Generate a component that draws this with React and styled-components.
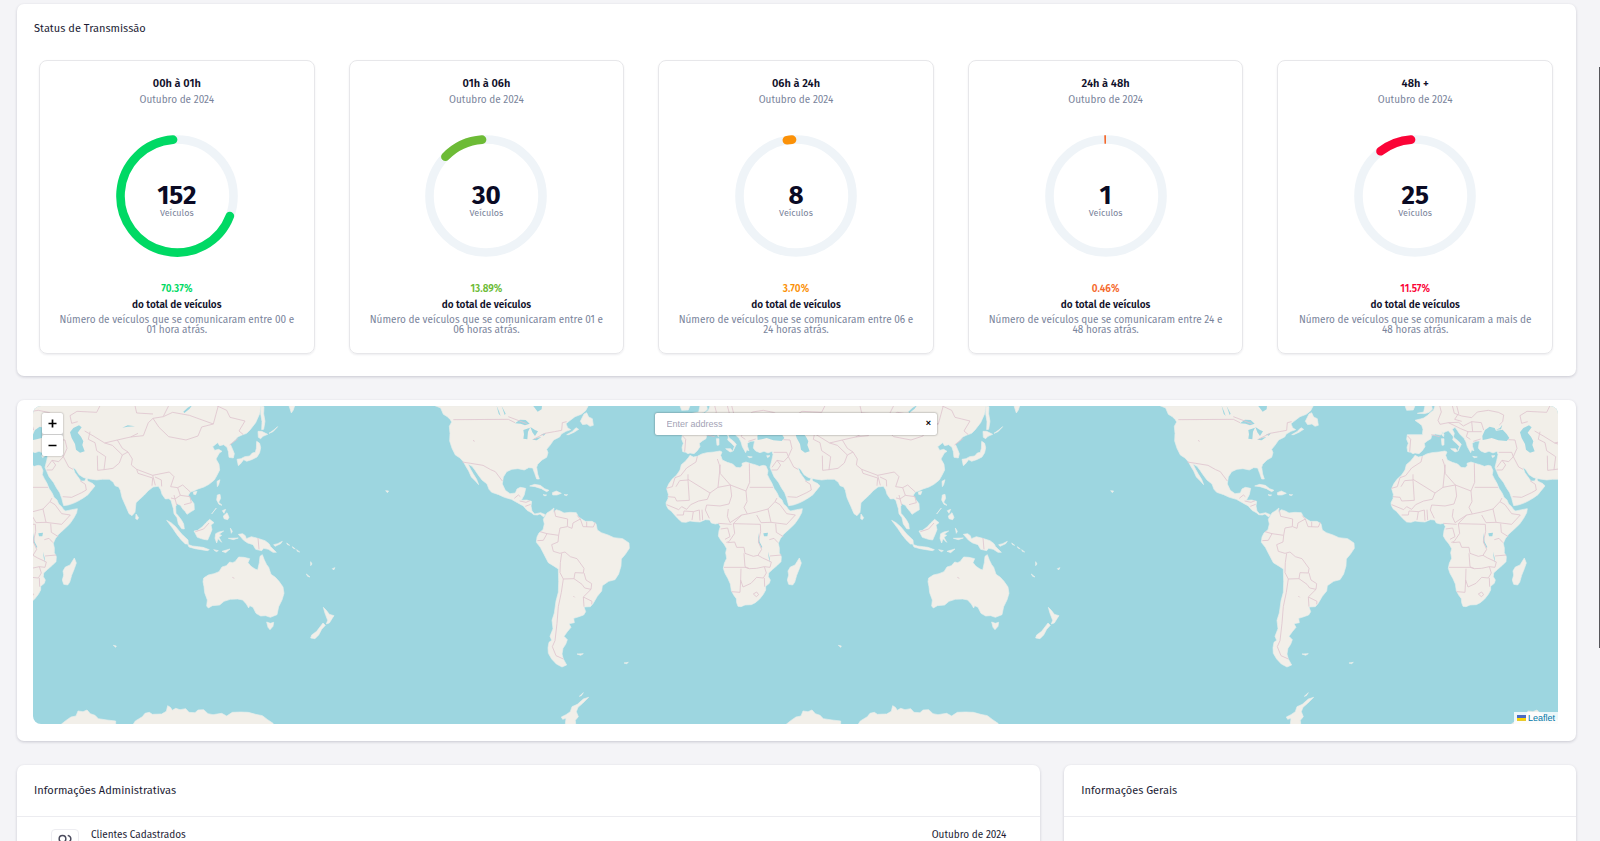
import React from "react";
import styled, { createGlobalStyle } from "styled-components";
import { Users } from "lucide-react";

const GlobalStyle = createGlobalStyle`
  * { box-sizing: border-box; }
  body {
    margin: 0;
    background: #f4f4f7;
    color: #1b1b33;
    font-family: "Fira Sans", Roboto, "Noto Sans", sans-serif;
  }
  h2, h3, p { margin: 0; }
`;

const Page = styled.main`
  display: flex;
  flex-direction: column;
  gap: 24px;
  height: 100vh;
  overflow: hidden;
  padding: 4px 24px 0 17px;
`;

const Panel = styled.section`
  flex: none;
  background: #fff;
  border-radius: 7px;
  box-shadow: 0 1px 3px rgba(30, 30, 60, 0.2);
`;

const PanelTitle = styled.h2`
  padding: ${(p) => (p.$ruled ? "17px 17px 16px" : "16px 17px")};
  font-size: 11px;
  font-weight: 400;
  line-height: 18px;
  border-bottom: 1px solid ${(p) => (p.$ruled ? "#ececf0" : "transparent")};
`;

const StatGrid = styled.div`
  display: grid;
  grid-template-columns: repeat(5, 1fr);
  gap: 34px;
  padding: 5px 23px 22px 22px;
`;

const StatCard = styled.article`
  display: flex;
  flex-direction: column;
  align-items: center;
  padding: 15px 16px 18px;
  border: 1px solid #e7e7ea;
  border-radius: 8px;
  box-shadow: 0 1px 2px rgba(30, 30, 60, 0.08);
  text-align: center;
`;

const StatTitle = styled.h3`
  font-size: 11px;
  font-weight: 600;
  line-height: 16px;
  color: #10102a;
`;

const StatMonth = styled.p`
  font-size: 10px;
  line-height: 16px;
  color: #7a849b;
`;

const RingBox = styled.div`
  display: grid;
  place-items: center;
  margin: 27px 0 24px;
  > * { grid-area: 1 / 1; }
`;

const RingSvg = styled.svg`
  display: block;
  width: 122px;
  height: 122px;
`;

const RingLabel = styled.div`
  padding-top: 10px;
`;

const RingNumber = styled.p`
  font-size: 26px;
  font-weight: 700;
  line-height: 24px;
  color: #0a0a24;
`;

const RingUnit = styled.p`
  font-size: 9px;
  line-height: 10px;
  color: #7a849b;
`;

const Percent = styled.p`
  font-size: 10px;
  font-weight: 600;
  line-height: 16px;
  color: ${(p) => p.$color};
`;

const Total = styled.p`
  font-size: 10px;
  font-weight: 600;
  line-height: 16px;
  color: #10102a;
`;

const Description = styled.p`
  padding-top: 2px;
  font-size: 10px;
  line-height: 10px;
  color: #7a849b;
`;

const MapPanel = styled(Panel)`
  padding: 6px 18px 17px 16px;
`;

const MapFrame = styled.div`
  position: relative;
  height: 318px;
  border-radius: 8px 8px 0 8px;
  overflow: hidden;
  background: #9dd6e0;
`;

const MapSvg = styled.svg`
  display: block;
  width: 100%;
  height: 100%;
`;

const ZoomControls = styled.div`
  position: absolute;
  top: 7px;
  left: 9px;
  display: flex;
  flex-direction: column;
  gap: 1px;
  background: #ccc;
  border-radius: 2px;
  box-shadow: 0 0 2px rgba(0, 0, 0, 0.4);
`;

const ZoomButton = styled.button`
  display: grid;
  place-items: center;
  width: 21px;
  height: 21px;
  padding: 0;
  border: 0;
  border-radius: 2px;
  background: #fff;
  color: #000;
`;

const SearchBox = styled.form`
  position: absolute;
  top: 7px;
  left: 50%;
  transform: translateX(-50%);
  display: flex;
  width: 282px;
  height: 22px;
  background: #fff;
  border-radius: 2px;
  box-shadow: 0 0 2px rgba(0, 0, 0, 0.5);
`;

const SearchInput = styled.input`
  flex: 1;
  min-width: 0;
  padding: 0 12px;
  border: 0;
  outline: 0;
  background: transparent;
  font: 9px "Liberation Sans", Arial, sans-serif;
  &::placeholder { color: #a3a3b5; opacity: 1; }
`;

const ClearButton = styled.button`
  width: 16px;
  height: 20px;
  padding: 0;
  border: 0;
  background: transparent;
  color: #000;
  font: bold 9px/20px "Liberation Sans", Arial, sans-serif;
`;

const Attribution = styled.a`
  position: absolute;
  right: 0;
  bottom: 0;
  display: flex;
  align-items: center;
  gap: 2px;
  padding: 0 3px;
  background: rgba(255, 255, 255, 0.8);
  color: #0078a8;
  font: 9px/12px "Liberation Sans", Arial, sans-serif;
  text-decoration: none;
`;

const InfoGrid = styled.div`
  display: grid;
  grid-template-columns: 2fr 1fr;
  gap: 24px;
`;

const InfoRow = styled.div`
  display: flex;
  align-items: flex-start;
  gap: 12px;
  padding: 12px 34px;
  font-size: 10px;
  line-height: 12px;
`;

const IconTile = styled.span`
  display: grid;
  place-items: center;
  width: 28px;
  height: 28px;
  border: 1px solid #ededf1;
  border-radius: 4px;
  color: #4a4a5c;
`;

const RowDate = styled.span`
  margin-left: auto;
`;

const ScrollThumb = styled.div`
  position: fixed;
  top: 8%;
  right: 0;
  width: 1px;
  height: 69%;
  background: #55555a;
`;

const STATS = [
  { title: "00h à 01h", count: 152, percent: "70.37", color: "#00d964", text: "Número de veículos que se comunicaram entre 00 e 01 hora atrás." },
  { title: "01h à 06h", count: 30, percent: "13.89", color: "#6dbb36", text: "Número de veículos que se comunicaram entre 01 e 06 horas atrás." },
  { title: "06h à 24h", count: 8, percent: "3.70", color: "#fb9108", text: "Número de veículos que se comunicaram entre 06 e 24 horas atrás." },
  { title: "24h à 48h", count: 1, percent: "0.46", color: "#f5692c", text: "Número de veículos que se comunicaram entre 24 e 48 horas atrás." },
  { title: "48h +", count: 25, percent: "11.57", color: "#fb0437", text: "Número de veículos que se comunicaram a mais de 48 horas atrás." },
];

const R = 56.5;
const CAP = 4;

function point(deg) {
  const a = (deg * Math.PI) / 180;
  return `${61 - R * Math.sin(a)} ${61 - R * Math.cos(a)}`;
}

/* Arc that runs counter-clockwise from the top; round caps stay inside its sweep. */
function Ring({ percent, color }) {
  const sweep = Number(percent) * 3.6;
  const tiny = sweep < 2 * CAP;
  const from = tiny ? 0 : CAP;
  const to = tiny ? sweep : sweep - CAP;
  return (
    <RingSvg viewBox="0 0 122 122" aria-hidden="true">
      <circle cx="61" cy="61" r={R} fill="none" stroke="#eff4f8" strokeWidth="8.6" />
      <path
        d={`M${point(from)} A${R} ${R} 0 ${to - from > 180 ? 1 : 0} 0 ${point(to)}`}
        fill="none"
        stroke={color}
        strokeWidth="8.6"
        strokeLinecap={tiny ? "butt" : "round"}
      />
    </RingSvg>
  );
}

const OLD_WORLD = [
  "M150 226 160 231 172 229 185 222 200 218 222 216 240 213 246 216 242 226 247 240 262 247 278 252 288 262 300 263 307 258 306 250 318 246 330 250 345 254 358 259 370 256 378 258 384 272 382 284 388 296 396 310 402 325 412 340 417 352 426 360 431 372 440 380 446 389 452 393 470 389 487 386 485 398 476 415 464 432 446 449 431 463 421 476 415 490 418 504 418 518 424 530 423 545 412 556 398 568 386 579 385 590 391 600 388 610 377 619 377 630 370 643 359 657 346 668 334 674 315 675 303 680 294 679 290 668 289 656 281 645 274 632 271 612 264 596 255 580 250 565 253 550 260 535 257 518 260 506 252 492 242 480 235 468 237 452 241 440 236 430 226 432 214 429 209 420 196 419 180 426 165 425 150 423 138 427 125 426 114 416 103 404 94 394 84 386 79 376 78 368 84 356 85 343 80 326 86 312 96 298 110 285 120 270 124 254 136 244 145 233Z",
  "M210 77 206 90 195 99 188 106 176 114 166 117 150 121 160 128 170 136 174 148 172 164 150 164 127 164 125 178 130 190 126 202 128 215 137 217 144 221 150 219 162 221 172 212 180 200 178 190 188 182 198 176 200 166 212 162 226 165 240 156 250 152 258 161 268 174 280 183 289 193 284 203 279 213 283 199 274 190 263 180 268 160 262 148 270 142 276 150 284 162 297 175 303 186 307 200 317 218 320 210 327 212 323 200 322 190 332 184 344 183 342 191 340 204 347 213 360 218 372 214 384 219 396 214 399 224 395 242 390 262 395 274 402 290 416 308 424 323 434 338 440 355 446 377 460 375 475 370 488 364 505 354 519 344 526 335 540 318 534 311 518 303 515 291 509 303 498 303 493 296 487 288 480 278 474 263 481 267 492 284 506 293 524 297 545 300 562 298 583 298 595 307 600 317 611 321 616 331 621 353 633 380 642 401 651 407 660 397 663 368 674 358 688 345 700 332 714 321 730 319 737 329 741 343 751 357 762 356 768 362 775 386 777 401 786 413 790 432 800 446 808 447 806 432 800 421 791 409 783 400 782 380 786 371 796 376 804 388 811 395 816 403 830 394 838 389 837 371 827 358 820 346 826 336 836 333 849 327 867 321 882 313 898 300 906 286 914 270 912 253 903 237 913 219 921 214 911 208 899 211 893 200 908 188 914 197 926 194 936 202 940 215 942 232 955 234 958 221 952 206 946 193 959 181 968 171 981 165 995 160 1005 150 1022 128 1034 101 1038 77Z",
  "M120 77 150 77 145 90 125 91ZM157 100 176 96 180 77 200 77 202 88 193 97 178 101Z",
  "M478 534 484 549 478 566 470 586 464 607 458 615 446 613 442 600 446 585 444 573 451 561 465 555Z",
  "M663 402 671 413 667 419 662 416Z",
  "M755 421 768 428 782 440 800 462 819 480 820 492 811 492 798 479 786 464 773 445Z",
  "M818 493 832 498 850 500 864 502 883 509 877 512 858 509 840 506 822 501ZM896 509 910 512 904 515ZM921 514 945 507 932 518Z",
  "M837 453 848 451 862 440 873 428 884 418 897 428 888 435 891 449 885 464 878 480 865 478 847 472Z",
  "M902 461 912 456 926 453 912 463 920 466 912 472 920 487 909 476 905 489 900 475Z",
  "M907 345 915 343 917 355 911 367 921 376 912 373 905 360ZM922 392 932 388 927 400ZM925 408 936 398 942 412 938 419 927 416ZM890 402 904 384 893 398Z",
  "M970 463 983 461 991 467 994 476 1009 470 1028 475 1050 482 1062 491 1067 500 1084 517 1074 517 1060 508 1046 505 1040 512 1022 508 1014 494 998 489 986 481 978 472ZM1076 494 1088 491 1102 484 1097 491 1080 499ZM946 444 952 454 949 460ZM940 475 970 474 955 479Z",
  "M1115 489 1124 496 1118 494ZM1132 500 1141 507 1134 504ZM1145 509 1154 516 1147 514ZM1174 582 1185 591 1178 589ZM1252 566 1260 563 1256 570ZM1187 545 1191 552 1187 557Z",
  "M866 594 880 585 897 581 912 575 921 561 934 557 944 546 952 548 960 545 971 531 987 532 1004 536 999 548 1008 559 1020 567 1028 570 1033 548 1035 529 1042 524 1048 540 1055 554 1061 562 1068 583 1081 592 1092 604 1104 621 1107 640 1101 660 1091 680 1086 704 1066 712 1052 707 1037 708 1023 700 1014 682 1004 677 1001 684 994 672 983 660 968 657 946 658 927 664 914 675 892 677 880 684 875 678 877 660 869 638 867 620 864 605Z",
  "M1055 726 1066 730 1076 727 1074 739 1065 749 1059 742Z",
  "M1225 682 1234 691 1243 703 1257 707 1251 716 1243 729 1234 732 1238 721 1230 700ZM1224 729 1231 736 1220 748 1211 765 1200 776 1187 774 1190 765 1205 754Z",
  "M966 238 978 236 989 230 1004 228 1012 219 1021 217 1024 205 1025 184 1034 190 1037 203 1034 218 1026 231 1010 239 995 244 986 239 976 252 970 257Z",
  "M1029 154 1040 154 1058 163 1044 169 1037 176 1030 172ZM1038 77 1047 80 1046 101 1050 124 1046 148 1040 149 1041 125 1037 101ZM1062 160 1075 151 1088 140 1074 155Z",
  "M1122 77 1139 77 1135 90 1129 99ZM906 304 915 299 911 314 907 320ZM835 336 846 334 842 344 836 343Z",
  "M231 155 237 163 236 170 231 166ZM229 176 237 176 237 195 231 196ZM257 206 272 206 278 214 270 216ZM323 229 337 231 328 233ZM380 227 390 227 383 233Z",
  "M430 1040 452 1022 468 1011 483 1008 489 993 504 995 516 990 526 1001 540 1006 550 1016 576 1020 602 1023 602 1040ZM650 1040 661 1023 682 1010 690 1000 703 997 712 1003 740 1002 754 994 758 977 766 982 772 991 782 985 795 989 812 986 822 997 840 998 849 990 866 989 879 1001 894 1004 920 1000 935 1008 952 997 977 996 1000 997 1022 1003 1042 1007 1058 1019 1074 1030 1080 1040ZM595 796 604 798 602 802ZM1412 332 1421 333 1417 338Z",
].join("");

const AMERICAS = [
  "M105 77 122 84 130 103 142 110 151 119 155 126 148 139 150 160 149 183 156 205 166 225 180 234 190 245 197 258 206 273 214 291 226 303 236 314 230 298 220 282 212 268 204 252 216 259 226 272 234 284 246 300 261 312 267 328 275 337 296 344 313 352 334 358 352 368 370 378 381 391 394 398 401 404 412 405 420 402 431 411 436 404 422 398 404 402 396 393 393 378 395 364 380 360 364 361 373 344 377 325 361 322 351 327 346 339 330 341 316 331 307 312 310 291 320 275 336 268 354 266 373 270 386 263 398 264 404 280 410 297 418 297 413 282 410 262 413 253 426 240 440 232 444 218 440 208 450 196 461 180 479 171 484 162 498 154 512 149 503 143 498 131 507 124 525 110 544 103 557 92 565 77Z",
  "M541 124 552 102 560 98 566 111 577 116 580 136 570 139 561 132 548 134ZM500 164 516 155 528 143 536 148 522 157 506 164Z",
  "M389 318 404 313 421 316 434 326 447 331 440 335 424 326 405 320ZM457 338 469 333 484 340 471 345 458 345ZM429 344 440 345 435 348ZM492 344 503 344 499 347Z",
  "M430 418 441 399 452 392 462 384 460 397 469 389 481 393 492 399 510 397 529 398 535 410 546 418 556 424 576 424 588 431 592 450 604 458 624 465 642 473 668 476 687 489 688 505 676 523 664 537 663 558 656 582 645 599 626 604 607 617 605 633 592 649 579 671 571 680 552 681 557 695 551 705 534 711 521 715 523 728 507 731 513 742 502 755 492 769 502 779 497 793 489 805 486 822 490 837 500 855 486 861 469 852 455 837 445 820 444 803 447 787 455 781 450 769 459 746 456 721 463 699 468 663 475 637 476 605 475 567 461 558 445 548 433 525 421 502 409 487 411 471 417 459 429 449 433 432Z",
  "M531 822 550 821 542 826ZM672 849 685 847 680 851Z",
  "M566 952 550 957 532 973 516 980 511 995 498 1004 484 1011 488 1018 498 1015 495 1040 528 1040 526 1021 535 1010 529 995 534 982 548 970ZM538 949 550 938 544 947Z",
].join("");

const INLAND_WATER = "M353 180 352 168 360 150 374 140 389 144 393 152 413 149 425 162 433 174 425 183 400 181 380 174 365 178ZM393 149 405 144 412 134 408 148ZM465 157 475 144 492 136 500 142 488 158 498 170 505 184 502 195 509 214 495 218 483 209 480 192 470 174ZM370 460 384 458 382 469 372 469ZM355 459 359 486 367 501 365 504 355 486ZM384 515 389 533 389 548 386 532ZM622 143 638 136 660 139 638 140ZM805 95 818 83 832 75 824 86 808 99Z";

const LAKES = "M345 130 360 119 377 120 389 131 375 136 362 131ZM370 150 390 143 384 155 382 178 370 176 372 163ZM391 141 405 150 414 154 405 168 397 157ZM396 179 412 173 424 171 410 181ZM423 163 438 160 431 167ZM399 77 426 77 425 88 413 95 405 85ZM290 78 297 94 302 108 296 101ZM305 78 317 101 314 105Z";

const OLD_BORDERS = "M172 229 168 246 140 264 122 287 105 293 97 320 79 325M144 283 144 300 119 302 108 320M144 298 210 339 234 322 271 315 241 281 238 254 232 237M144 300 148 361 110 363 105 352 84 350M210 339 202 358 176 363 152 374 140 388 125 380 116 389 80 374M234 322 241 254M271 315 275 348 267 372 240 378 200 375 196 390 208 415M271 315 318 333 329 307 328 250M329 322 399 322M318 333 321 365 312 382 322 402 350 396 384 387 405 365 411 354M322 402 305 405 270 428 262 409 265 387M384 387 393 427 440 433 466 405 440 401 420 374 405 365M393 427 363 428 350 405M305 405 280 431 284 460 267 485 259 487M280 431 361 433 362 454 355 486 365 508 354 526 340 529 315 520 312 502 290 502 284 486 263 488M312 520 315 560 328 566 315 562 252 562M303 566 302 600 300 637 275 635M302 600 309 621 333 610 350 592 370 594 379 579 373 560 350 565 328 566M354 526 368 534 394 546 390 562 373 560M373 594 374 620M388 479 402 475 414 488M390 528 424 525M407 431 409 457 430 470M235 430 275 433M242 447 263 444 270 470 255 478M340 642 350 636 356 644 349 650ZM156 420 160 395 132 393 130 405 110 405M180 422 178 390 160 395M188 420 186 389M128 168 137 178 134 215M199 164 224 170M224 77 229 96 219 121 225 133 250 128 281 127 295 138 320 125 349 128 356 150M250 128 269 137 287 146 309 155 304 170 316 178M262 77 268 100 290 108 320 113 337 96 370 91 400 97 416 105 413 125 403 135M275 77 281 100 269 118 290 124M309 155 350 155M320 125 323 155M325 184 347 177M401 217 440 217 445 230 431 245 411 241 396 262M445 230 461 261 474 268M445 230 456 205 450 180 430 179M395 270 412 270 422 255 411 241M443 350 470 352 500 338 514 330 511 313 495 302M465 107 486 94 545 97 555 77M465 107 470 130 488 125M509 153 535 168 569 189 607 180 647 171 669 160M545 212 572 230 567 269 548 271 547 227M567 269 594 265 613 249 622 225 639 216M525 155 520 178 540 188 545 212M569 189 592 196 622 225M607 180 622 205 639 216 652 237 649 255 665 268 713 286 763 276 777 290 767 320 788 323 796 346 780 357 768 354M647 171 685 167 700 128 714 115 745 110 773 97 823 106 895 132 860 141 849 168 813 180 761 170 732 142 714 115M660 77 665 99 714 102M895 132 910 77M905 77 935 91 945 112 990 123 972 153 985 164M944 195 970 175M745 109 761 77M665 268 669 280 713 294 711 317M713 286 721 316M740 319 739 300 720 291M788 323 803 315 826 336M796 346 825 350 829 368 807 374M777 345 785 375M841 455 866 447 882 429M1029 474 1032 508M958 595 952 592";

const NEW_BORDERS = "M160 119 325 118 345 128M325 110 380 131M400 178 435 160 463 155 485 151 487 128 500 125M187 246 212 250 249 256 272 269 286 275 307 303M343 355 355 345 361 350M359 363 378 367 390 362M376 379 392 373M463 391 467 409 503 417 502 440 480 444 476 466 441 461 420 455M412 482 430 481 441 461M503 440 516 445 519 429 541 417 532 407M541 417 549 440 580 441 586 427M560 425 560 441M476 466 474 486 455 494 460 514 480 520 495 516 511 530 531 536 552 565 550 579 525 578 522 596 490 597 480 578 481 548 485 520M552 579 558 600 575 611 573 628 554 624 546 613 522 596M573 628 550 651 576 664 575 673M550 651 552 680M490 597 484 637 475 680 471 730 465 782 457 800 468 827 490 837M219 181 224 184M520 648 524 652";

function World({ offset }) {
  return (
    <g transform={`translate(${offset} 0)`}>
      <path d={OLD_WORLD} fill="#f2efe9" stroke="#e8eeec" strokeWidth="2" strokeLinejoin="round" />
      <path d={INLAND_WATER} fill="#9dd6e0" />
      <path d={OLD_BORDERS} fill="none" stroke="#e0c6d0" strokeWidth="2.6" strokeLinejoin="round" />
      <g transform="translate(-720 0)">
        <path d={AMERICAS} fill="#f2efe9" stroke="#e8eeec" strokeWidth="2" strokeLinejoin="round" />
        <path d={LAKES} fill="#9dd6e0" />
        <path d={NEW_BORDERS} fill="none" stroke="#e0c6d0" strokeWidth="2.6" strokeLinejoin="round" />
      </g>
    </g>
  );
}

function WorldMap() {
  return (
    <MapSvg viewBox="0 0 1525 318" preserveAspectRatio="xMidYMid slice" role="img" aria-label="Mapa">
      <g transform="translate(607 -26) scale(0.33333)">
        <World offset={-2175} />
        <World offset={0} />
        <World offset={2175} />
      </g>
    </MapSvg>
  );
}

export default function App() {
  return (
    <>
      <GlobalStyle />
      <Page>
        <Panel>
          <PanelTitle>Status de Transmissão</PanelTitle>
          <StatGrid>
            {STATS.map((s) => (
              <StatCard key={s.title}>
                <StatTitle>{s.title}</StatTitle>
                <StatMonth>Outubro de 2024</StatMonth>
                <RingBox>
                  <Ring percent={s.percent} color={s.color} />
                  <RingLabel>
                    <RingNumber>{s.count}</RingNumber>
                    <RingUnit>Veículos</RingUnit>
                  </RingLabel>
                </RingBox>
                <Percent $color={s.color}>{s.percent}%</Percent>
                <Total>do total de veículos</Total>
                <Description>{s.text}</Description>
              </StatCard>
            ))}
          </StatGrid>
        </Panel>

        <MapPanel>
          <MapFrame>
            <WorldMap />
            <ZoomControls>
              <ZoomButton type="button" aria-label="Zoom in">
                <svg width="9" height="9" viewBox="0 0 9 9"><path d="M4.5 0.5V8.5M0.5 4.5H8.5" stroke="#000" strokeWidth="1.7" /></svg>
              </ZoomButton>
              <ZoomButton type="button" aria-label="Zoom out">
                <svg width="9" height="9" viewBox="0 0 9 9"><path d="M0.5 4.5H8.5" stroke="#000" strokeWidth="1.7" /></svg>
              </ZoomButton>
            </ZoomControls>
            <SearchBox onSubmit={(e) => e.preventDefault()}>
              <SearchInput type="text" placeholder="Enter address" aria-label="Enter address" />
              <ClearButton type="reset" aria-label="Reset">×</ClearButton>
            </SearchBox>
            <Attribution href="#leaflet">
              <svg width="9" height="6" viewBox="0 0 12 8">
                <path fill="#4C6BC1" d="M0 0h12v4H0z" />
                <path fill="#FFD500" d="M0 4h12v3H0z" />
                <path fill="#E0BC00" d="M0 7h12v1H0z" />
              </svg>
              Leaflet
            </Attribution>
          </MapFrame>
        </MapPanel>

        <InfoGrid>
          <Panel>
            <PanelTitle $ruled>Informações Administrativas</PanelTitle>
            <InfoRow>
              <IconTile><Users size={20} strokeWidth={1.75} /></IconTile>
              <span>Clientes Cadastrados</span>
              <RowDate>Outubro de 2024</RowDate>
            </InfoRow>
          </Panel>
          <Panel>
            <PanelTitle $ruled>Informações Gerais</PanelTitle>
          </Panel>
        </InfoGrid>
      </Page>
      <ScrollThumb />
    </>
  );
}
